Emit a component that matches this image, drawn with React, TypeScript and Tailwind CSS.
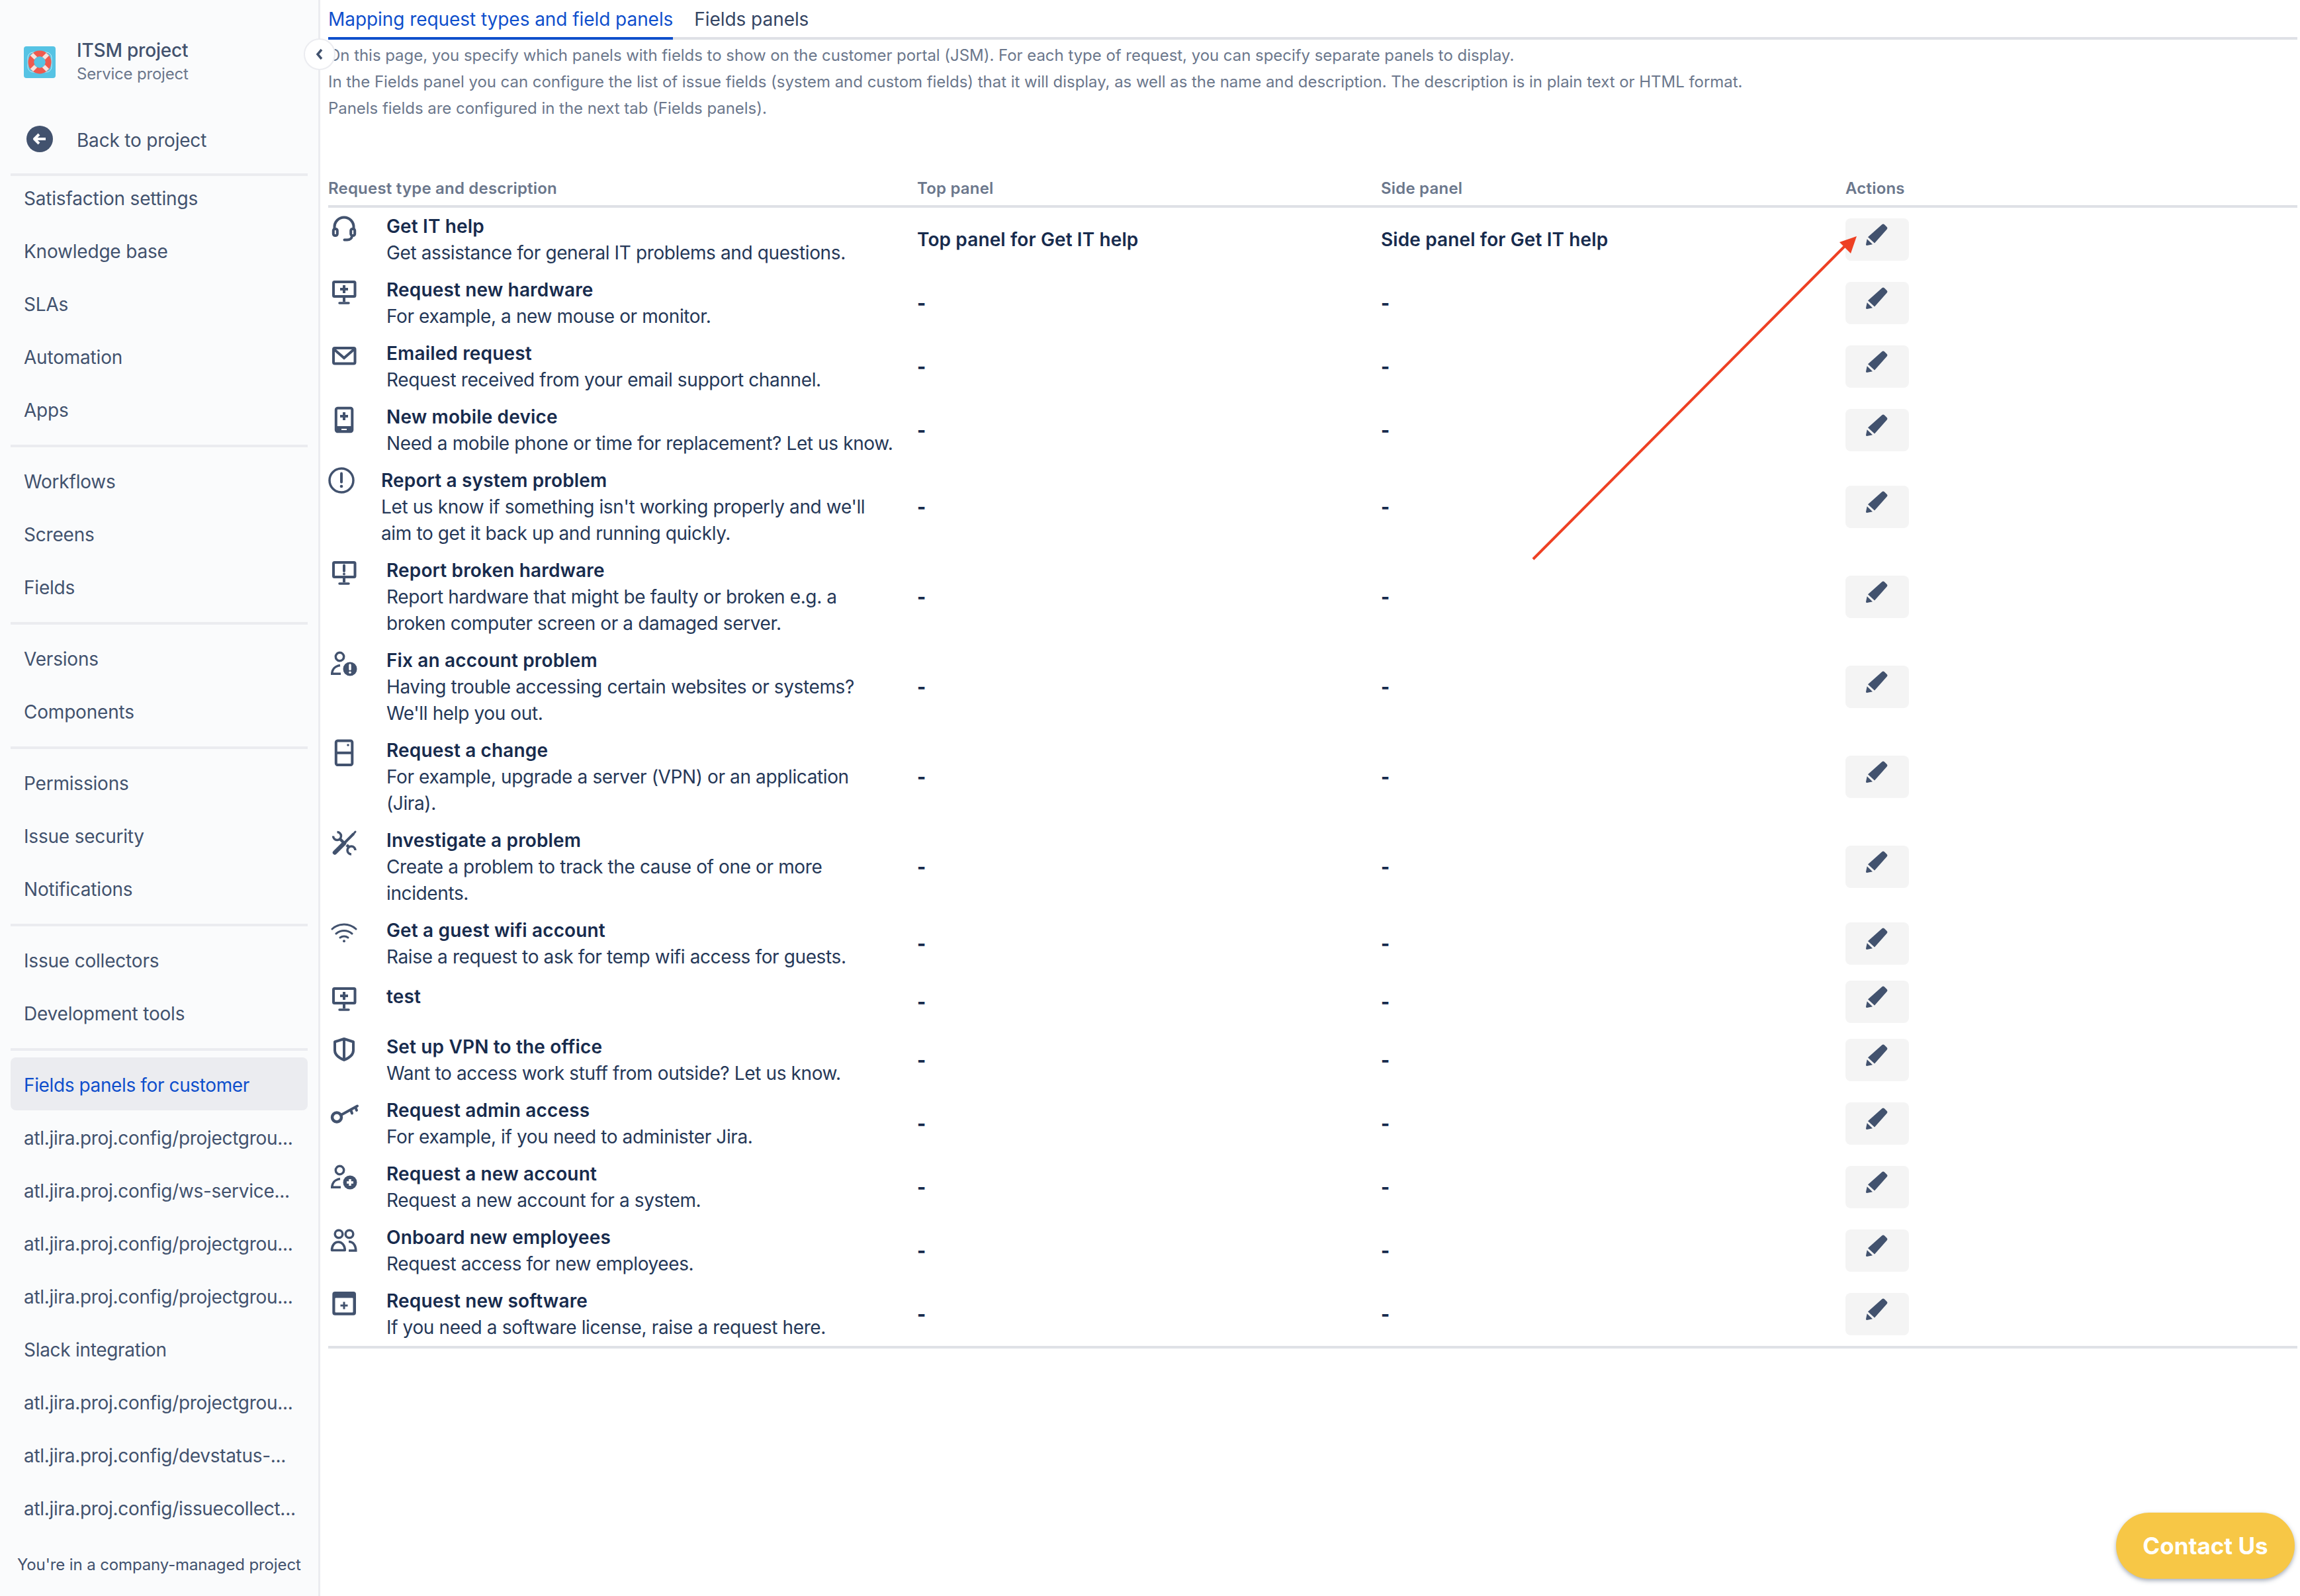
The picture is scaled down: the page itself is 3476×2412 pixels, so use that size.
import type { ReactNode } from "react";

const navSections = [
  ["Satisfaction settings", "Knowledge base", "SLAs", "Automation", "Apps"],
  ["Workflows", "Screens", "Fields"],
  ["Versions", "Components"],
  ["Permissions", "Issue security", "Notifications"],
  ["Issue collectors", "Development tools"],
];

const appLinks = [
  "atl.jira.proj.config/projectgrou...",
  "atl.jira.proj.config/ws-service...",
  "atl.jira.proj.config/projectgrou...",
  "atl.jira.proj.config/projectgrou...",
  "Slack integration",
  "atl.jira.proj.config/projectgrou...",
  "atl.jira.proj.config/devstatus-...",
  "atl.jira.proj.config/issuecollect...",
];

function Glyph({ children }: { children: ReactNode }) {
  return (
    <svg width="48" height="48" viewBox="0 0 48 48" fill="none" stroke="#42526e" strokeWidth="4" className="shrink-0">
      {children}
    </svg>
  );
}

const monitor = (
  <>
    <rect x="8" y="8" width="32.5" height="22" rx="1.5" />
    <path d="M24 31v7" strokeWidth="4" />
    <path d="M17 40h14" strokeWidth="3.5" strokeLinecap="round" />
  </>
);

const personBody = (
  <>
    <circle cx="17.5" cy="14.5" r="6.2" strokeWidth="3.5" />
    <path d="M5.8 40.5 C6 33 11 28.5 18 27.5 M4 40.3h15" strokeWidth="3.5" />
  </>
);

const icons: Record<string, ReactNode> = {
  headset: (
    <Glyph>
      <path d="M9.5 24v-3a14.5 14.5 0 0 1 29 0v3" />
      <rect x="7.8" y="24" width="6" height="10" rx="2.5" />
      <rect x="34.2" y="24" width="6" height="10" rx="2.5" />
      <path d="M36 34c0 4-3 6.5-7.5 6.5h-4" strokeLinecap="round" />
    </Glyph>
  ),
  monitorPlus: (
    <Glyph>
      {monitor}
      <path d="M24 13v12M18 19h12" />
    </Glyph>
  ),
  mail: (
    <Glyph>
      <rect x="8" y="12" width="32.5" height="23.5" rx="2" />
      <path d="M9 14l15 13 15-13" />
    </Glyph>
  ),
  mobile: (
    <Glyph>
      <rect x="11.8" y="6.8" width="24.5" height="35.5" rx="2.5" />
      <path d="M12 35h24v7H12z" fill="#42526e" strokeWidth="2" />
      <path d="M20 39h8" stroke="#fff" strokeWidth="2" />
      <path d="M24 13v12M18 19h12" />
    </Glyph>
  ),
  alert: (
    <svg width="40" height="40" viewBox="0 0 40 40" fill="none" stroke="#42526e" strokeWidth="3.5" className="shrink-0">
      <circle cx="20" cy="20" r="18" />
      <path d="M20 9.5v13" strokeWidth="4" strokeLinecap="round" />
      <circle cx="20" cy="29" r="2.3" fill="#42526e" stroke="none" />
    </svg>
  ),
  monitorAlert: (
    <Glyph>
      {monitor}
      <path d="M24 12.5v8.5" strokeWidth="4" strokeLinecap="round" />
      <circle cx="24" cy="25.5" r="2" fill="#42526e" stroke="none" />
    </Glyph>
  ),
  personAlert: (
    <Glyph>
      {personBody}
      <circle cx="33" cy="33" r="10.5" fill="#42526e" stroke="none" />
      <path d="M33 27v6.5" stroke="#fff" strokeWidth="3.5" strokeLinecap="round" />
      <circle cx="33" cy="38.2" r="1.8" fill="#fff" stroke="none" />
    </Glyph>
  ),
  server: (
    <Glyph>
      <rect x="11.8" y="5.5" width="24.5" height="36.5" rx="2.5" />
      <path d="M12 23.8h24" />
      <circle cx="30" cy="12" r="1.8" fill="#42526e" stroke="none" />
    </Glyph>
  ),
  tools: (
    <Glyph>
      <path d="M10 38.5l14-14" strokeWidth="6.5" strokeLinecap="round" />
      <path d="M24 24.5l14.500-14.500" strokeWidth="4" />
      <path d="M38 10.500l3-3.500" strokeWidth="3" strokeLinecap="round" />
      <path d="M7.500 13.500A6 6 0 1 0 13.500 7.500" strokeWidth="3.500" />
      <path d="M18 18l4.500 4.500M28 27l4 4" strokeWidth="4.500" />
      <path d="M41 35A6 6 0 1 0 35 41" strokeWidth="3.500" />
    </Glyph>
  ),
  wifi: (
    <Glyph>
      <path d="M6 18c10-9.5 26-9.5 36 0" strokeWidth="3" strokeLinecap="round" />
      <path d="M12 25c7-6 17-6 24 0" strokeWidth="3" strokeLinecap="round" />
      <path d="M18 31c3.500-2.800 8.500-2.800 12 0" strokeWidth="3" strokeLinecap="round" />
      <circle cx="24" cy="36.300" r="2" fill="#42526e" stroke="none" />
    </Glyph>
  ),
  shield: (
    <Glyph>
      <path d="M24 8l14 4.500v13c0 6.500-5.500 11-14 14.500-8.500-3.500-14-8-14-14.500v-13z" strokeLinejoin="round" />
      <path d="M24 8v32" />
    </Glyph>
  ),
  key: (
    <Glyph>
      <circle cx="13" cy="30.500" r="7" strokeWidth="4.500" />
      <path d="M19.500 27L44 13.500M34 19l2 5.500M41 15l2 5" strokeWidth="4" strokeLinecap="round" />
    </Glyph>
  ),
  personPlus: (
    <Glyph>
      {personBody}
      <circle cx="33" cy="33" r="10.500" fill="#42526e" stroke="none" />
      <path d="M33 28v10M28 33h10" stroke="#fff" strokeWidth="3.500" />
    </Glyph>
  ),
  people: (
    <Glyph>
      <circle cx="16" cy="15" r="5.800" strokeWidth="3.500" />
      <circle cx="32" cy="15" r="5.800" strokeWidth="3.500" />
      <path d="M5.500 39.500c0-7 4-12.500 9.800-12.500s10 5.500 10 12.500z" strokeLinejoin="round" strokeWidth="3.500" />
      <path d="M31 26.500c7 0 10.800 6 10.800 13.500H31" strokeWidth="3.500" />
    </Glyph>
  ),
  software: (
    <Glyph>
      <rect x="6.300" y="6" width="35.700" height="35.700" rx="4" fill="#42526e" stroke="none" />
      <rect x="10.500" y="15.500" width="27" height="22" rx="1" fill="#fff" stroke="none" />
      <path d="M24 21.500v11M18.500 27h11" strokeWidth="3" />
    </Glyph>
  ),
};

type Row = { icon: string; name: string; desc?: ReactNode; top?: string; side?: string };

const rows: Row[] = [
  { icon: "headset", name: "Get IT help", desc: "Get assistance for general IT problems and questions.", top: "Top panel for Get IT help", side: "Side panel for Get IT help" },
  { icon: "monitorPlus", name: "Request new hardware", desc: "For example, a new mouse or monitor." },
  { icon: "mail", name: "Emailed request", desc: "Request received from your email support channel." },
  { icon: "mobile", name: "New mobile device", desc: "Need a mobile phone or time for replacement? Let us know." },
  { icon: "alert", name: "Report a system problem", desc: "Let us know if something isn't working properly and we'll aim to get it back up and running quickly." },
  { icon: "monitorAlert", name: "Report broken hardware", desc: "Report hardware that might be faulty or broken e.g. a broken computer screen or a damaged server." },
  { icon: "personAlert", name: "Fix an account problem", desc: "Having trouble accessing certain websites or systems? We'll help you out." },
  { icon: "server", name: "Request a change", desc: "For example, upgrade a server (VPN) or an application (Jira)." },
  { icon: "tools", name: "Investigate a problem", desc: "Create a problem to track the cause of one or more incidents." },
  { icon: "wifi", name: "Get a guest wifi account", desc: "Raise a request to ask for temp wifi access for guests." },
  { icon: "monitorPlus", name: "test" },
  { icon: "shield", name: "Set up VPN to the office", desc: "Want to access work stuff from outside? Let us know." },
  { icon: "key", name: "Request admin access", desc: "For example, if you need to administer Jira." },
  { icon: "personPlus", name: "Request a new account", desc: "Request a new account for a system." },
  { icon: "people", name: "Onboard new employees", desc: "Request access for new employees." },
  { icon: "software", name: "Request new software", desc: "If you need a software license, raise a request here." },
];

function Pencil() {
  return (
    <svg width="34" height="34" viewBox="0 0 34 34" fill="#42526e" className="mb-4">
      <path d="M24.300 2.300a2.500 2.500 0 0 1 3.500 0l3.800 3.700a2.500 2.500 0 0 1 .1 3.500L13 30.500 3 21.300z" />
      <path d="M1.700 24.200L10 32.300 1.500 33.900Q0 34 0 32.500z" />
    </svg>
  );
}

function Sidebar() {
  return (
    <aside className="flex w-[484px] shrink-0 flex-col border-r-[3px] border-[#ebecf0] bg-[#fafbfc] text-[28px] leading-10 tracking-[-0.2px] text-[#42526e]">
      <div className="flex items-center gap-8 pl-9 pt-[58px]">
        <svg width="48" height="48" viewBox="0 0 48 48" className="shrink-0">
          <rect width="48" height="48" rx="4" fill="#56c3e4" />
          <rect x="6" y="9" width="36" height="30" rx="8" fill="none" stroke="#bfe9f5" strokeWidth="1" />
          <circle cx="24" cy="24" r="13" fill="none" stroke="#ee5a4f" strokeWidth="9" />
          <path d="M12 12l6 6M36 12l-6 6M12 36l6-6M36 36l-6-6" stroke="#f4e4e0" strokeWidth="6" />
          <circle cx="24" cy="24" r="8.500" fill="#56c3e4" />
        </svg>
        <div>
          <div className="font-medium leading-9">ITSM project</div>
          <div className="text-[24px] leading-9 text-[#6b778c]">Service project</div>
        </div>
      </div>
      <div className="mt-[60px] flex h-10 items-center gap-9 pl-10">
        <svg width="40" height="40" viewBox="0 0 40 40" className="shrink-0">
          <circle cx="20" cy="20" r="20" fill="#42526e" />
          <path d="M29 20H13M19 13l-7 7 7 7" fill="none" stroke="#fff" strokeWidth="4" strokeLinejoin="round" />
        </svg>
        <span className="relative top-0.5">Back to project</span>
      </div>
      <nav className="mt-[32px] flex flex-col">
        {navSections.map((section, i) => (
          <div key={i}>
            <div className={`mx-4 h-1 bg-[#ebecf0] ${i === 0 ? "" : "mb-[18px]"}`} />
            <div className="flex flex-col gap-3">
              {section.map((item) => (
                <a key={item} className="flex h-[68px] items-center pl-9">
                  {item}
                </a>
              ))}
            </div>
            <div className="h-[18px]" />
          </div>
        ))}
        <div className="mx-4 h-1 bg-[#ebecf0]" />
        <a className="mx-4 mt-[10px] flex h-20 items-center rounded-lg bg-[#ebecf0] pl-5 pt-[3px] tracking-[-0.38px] text-[#0f4fcc]">
          Fields panels for customer
        </a>
        <div className="mt-2 flex flex-col gap-3 tracking-[-0.3px]">
          {appLinks.map((item, i) => (
            <a key={i} className="flex h-[68px] items-center pl-9">
              {item}
            </a>
          ))}
        </div>
      </nav>
      <div className="mt-[31px] pl-[26px] text-[24px] leading-10 tracking-[-0.12px]">You're in a company-managed project</div>
    </aside>
  );
}

export default function App() {
  return (
    <div className="relative flex h-screen w-full overflow-hidden bg-white font-[Inter,sans-serif] text-[#172b4d] antialiased">
      <Sidebar />
      <button className="absolute left-[459px] top-[58px] z-10 flex h-12 w-12 items-center justify-center rounded-full border-2 border-[#ebecf0] bg-white">
        <svg width="14" height="20" viewBox="0 0 14 20" fill="none" stroke="#42526e" strokeWidth="3.500">
          <path d="M10 3L4 10l6 7" />
        </svg>
      </button>

      <main className="min-w-0 flex-1 pl-3 pr-1">
        <div className="flex h-[60px] gap-8 border-b-4 border-[#dfe1e6] text-[28px] leading-10 tracking-[-0.06px]">
          <div className="-mb-1 h-[60px] border-b-4 border-[#0f4fcc] pt-[9px] text-[#0f4fcc]">Mapping request types and field panels</div>
          <div className="pt-[9px] text-[#344563]">Fields panels</div>
        </div>

        <div className="mt-1 text-[24px] leading-10 tracking-[-0.04px] text-[#6b778c]">
          <p>On this page, you specify which panels with fields to show on the customer portal (JSM). For each type of request, you can specify separate panels to display.</p>
          <p>In the Fields panel you can configure the list of issue fields (system and custom fields) that it will display, as well as the name and description. The description is in plain text or HTML format.</p>
          <p>Panels fields are configured in the next tab (Fields panels).</p>
        </div>

        <table className="mt-[81px] w-full table-fixed border-b-4 border-[#dfe1e6]">
          <thead>
            <tr className="border-b-4 border-[#dfe1e6] text-left text-[24px] leading-10 tracking-[0.2px] text-[#6b778c]">
              <th className="w-[890px] pb-[5px] font-semibold">Request type and description</th>
              <th className="w-[701px] pb-[5px] font-semibold">Top panel</th>
              <th className="w-[702px] pb-[5px] font-semibold">Side panel</th>
              <th className="pb-[5px] font-semibold">Actions</th>
            </tr>
          </thead>
          <tbody className="text-[28px] leading-10">
            {rows.map((row, i) => (
              <tr key={i}>
                <td className="py-2 pr-[34px] align-top">
                  <div className={`flex gap-10 ${row.desc ? "" : "pt-1"}`}>
                    {icons[row.icon]}
                    <div className="min-w-0">
                      <div className="font-semibold tracking-[0.15px]">{row.name}</div>
                      {row.desc && <div className="tracking-[-0.38px] text-[#253858]">{row.desc}</div>}
                    </div>
                  </div>
                </td>
                <td className="py-2 align-middle font-semibold tracking-[0.12px]">{row.top ?? <span className="font-extrabold">-</span>}</td>
                <td className="py-2 align-middle font-semibold tracking-[0.12px]">{row.side ?? <span className="font-extrabold">-</span>}</td>
                <td className="py-2 align-middle">
                  <button className="flex h-16 w-24 items-center justify-center rounded-lg bg-[#f4f4f4]">
                    <Pencil />
                  </button>
                </td>
              </tr>
            ))}
          </tbody>
        </table>
      </main>

      {/* red annotation arrow */}
      <svg className="pointer-events-none absolute left-[2300px] top-[340px]" width="520" height="520" viewBox="0 0 520 520" fill="#ee4023">
        <path d="M17 505L490 30" stroke="#ee4023" strokeWidth="4" />
        <path d="M506 17L480 26L497 43z" />
      </svg>

      <button className="absolute left-[3198px] top-[2286px] flex h-[100px] w-[270px] items-center justify-center rounded-full bg-[#f7c746] text-[35px] font-bold text-white shadow-[0_3px_6px_rgba(80,95,121,0.5)]">
        Contact Us
      </button>
    </div>
  );
}
